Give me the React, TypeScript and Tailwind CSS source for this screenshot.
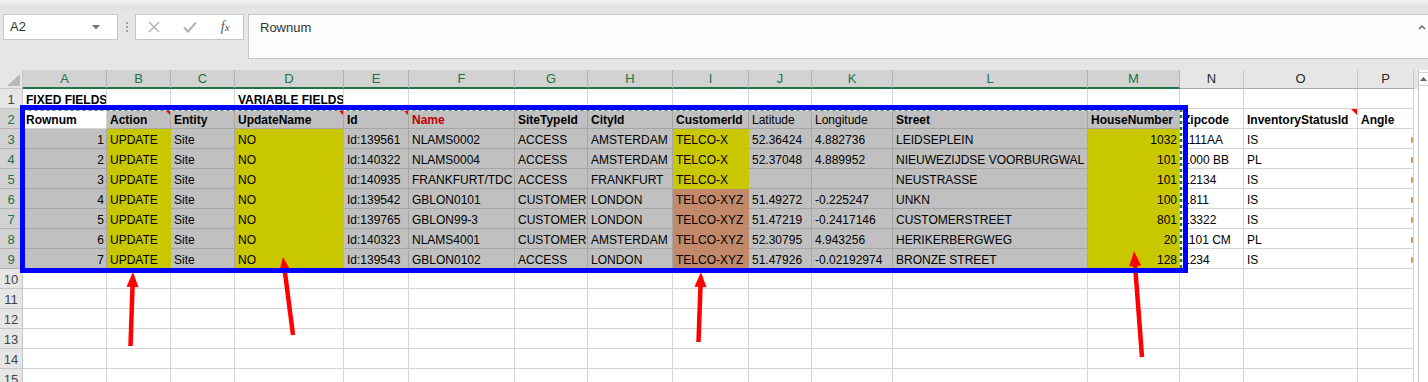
import React from 'react';

type Fill = 'w' | 'g' | 'y' | 'b';
type Cell = { t?: string; f: Fill; r?: boolean; b?: boolean; red?: boolean; tri?: boolean; mark?: boolean };

const fillCls: Record<Fill, string> = {
  w: 'bg-white border-r border-b border-[#d4d4d4]',
  g: 'bg-[#c0c0c0] border-r border-b border-[#a6a6a6]',
  y: 'bg-[#c9c700] border-r border-b border-[#c9c700]',
  b: 'bg-[#c1896a] border-r border-b border-[#c1896a]',
};

const data: string[][] = [
  ['1', 'Id:139561', 'NLAMS0002', 'ACCESS', 'AMSTERDAM', 'TELCO-X', '52.36424', '4.882736', 'LEIDSEPLEIN', '1032', '1111AA', 'IS'],
  ['2', 'Id:140322', 'NLAMS0004', 'ACCESS', 'AMSTERDAM', 'TELCO-X', '52.37048', '4.889952', 'NIEUWEZIJDSE VOORBURGWAL', '101', '1000 BB', 'PL'],
  ['3', 'Id:140935', 'FRANKFURT/TDC', 'ACCESS', 'FRANKFURT', 'TELCO-X', '', '', 'NEUSTRASSE', '101', '12134', 'IS'],
  ['4', 'Id:139542', 'GBLON0101', 'CUSTOMER', 'LONDON', 'TELCO-XYZ', '51.49272', '-0.225247', 'UNKN', '100', '1811', 'IS'],
  ['5', 'Id:139765', 'GBLON99-3', 'CUSTOMER', 'LONDON', 'TELCO-XYZ', '51.47219', '-0.2417146', 'CUSTOMERSTREET', '801', '13322', 'IS'],
  ['6', 'Id:140323', 'NLAMS4001', 'CUSTOMER', 'AMSTERDAM', 'TELCO-XYZ', '52.30795', '4.943256', 'HERIKERBERGWEG', '20', '1101 CM', 'PL'],
  ['7', 'Id:139543', 'GBLON0102', 'ACCESS', 'LONDON', 'TELCO-XYZ', '51.47926', '-0.02192974', 'BRONZE STREET', '128', '1234', 'IS'],
];

const empty = (): Cell[] => Array.from({ length: 16 }, () => ({ f: 'w' as Fill }));

const rows: Cell[][] = [];
{
  const r1 = empty();
  r1[0] = { t: 'FIXED FIELDS', f: 'w', b: true };
  r1[3] = { t: 'VARIABLE FIELDS', f: 'w', b: true };
  rows.push(r1);
  rows.push([
    { t: 'Rownum', f: 'w', b: true },
    { t: 'Action', f: 'g', b: true, tri: true },
    { t: 'Entity', f: 'g', b: true },
    { t: 'UpdateName', f: 'g', b: true, tri: true },
    { t: 'Id', f: 'g', b: true, tri: true },
    { t: 'Name', f: 'g', b: true, red: true },
    { t: 'SiteTypeId', f: 'g', b: true },
    { t: 'CityId', f: 'g', b: true },
    { t: 'CustomerId', f: 'g', b: true },
    { t: 'Latitude', f: 'g' },
    { t: 'Longitude', f: 'g' },
    { t: 'Street', f: 'g', b: true },
    { t: 'HouseNumber', f: 'g', b: true },
    { t: 'Zipcode', f: 'w', b: true },
    { t: 'InventoryStatusId', f: 'w', b: true, tri: true },
    { t: 'Angle', f: 'w', b: true },
  ]);
  data.forEach((d, i) => {
    rows.push([
      { t: d[0], f: 'g', r: true },
      { t: 'UPDATE', f: 'y' },
      { t: 'Site', f: 'g' },
      { t: 'NO', f: 'y' },
      { t: d[1], f: 'g' },
      { t: d[2], f: 'g' },
      { t: d[3], f: 'g' },
      { t: d[4], f: 'g' },
      { t: d[5], f: i < 3 ? 'y' : 'b' },
      { t: d[6], f: 'g' },
      { t: d[7], f: 'g' },
      { t: d[8], f: 'g' },
      { t: d[9], f: 'y', r: true },
      { t: d[10], f: 'w' },
      { t: d[11], f: 'w' },
      { f: 'w', mark: true },
    ]);
  });
  for (let i = 0; i < 6; i++) rows.push(empty());
}

const letters = 'ABCDEFGHIJKLMNOP'.split('');

function CellView({ c }: { c: Cell }) {
  if (c.mark) {
    return (
      <div className={`h-[20px] flex items-center justify-end pt-[2px] ${fillCls[c.f]}`}>
        <span className="block w-[2px] h-[6px] bg-[#dc9a5a] rounded-[1px]" />
      </div>
    );
  }
  return (
    <div
      className={`relative h-[20px] overflow-hidden whitespace-nowrap text-[12px] leading-[23px] ${fillCls[c.f]} ${
        c.r ? 'text-right pl-[3px] pr-[2px]' : 'text-left pl-[3px] pr-[1px]'
      } ${c.b ? 'font-bold' : 'font-normal'} ${c.red ? 'text-[#c00000]' : 'text-black'}`}
    >
      {c.t}
      {c.tri && (
        <span className="absolute top-0 right-0 w-0 h-0 border-l-[6px] border-l-transparent border-t-[6px] border-t-[#ff0000]" />
      )}
    </div>
  );
}

function Arrow({ x1, y1, x2, y2 }: { x1: number; y1: number; x2: number; y2: number }) {
  const dx = x2 - x1;
  const dy = y2 - y1;
  const len = Math.hypot(dx, dy);
  const ux = dx / len;
  const uy = dy / len;
  const hl = 15;
  const hw = 6;
  const bx = x2 - ux * hl;
  const by = y2 - uy * hl;
  const px = -uy;
  const py = ux;
  const pts = `${x2},${y2} ${bx + px * hw},${by + py * hw} ${bx - px * hw},${by - py * hw}`;
  return (
    <g>
      <line x1={x1} y1={y1} x2={bx + ux * 2} y2={by + uy * 2} stroke="#ff0000" strokeWidth={4.5} />
      <polygon points={pts} fill="#ff0000" />
    </g>
  );
}

export default function App() {
  return (
    <div className="relative w-[1428px] h-[382px] overflow-hidden bg-[#e6e6e6] font-['Liberation_Sans',Arial,sans-serif]">
      {/* ribbon remnant */}
      <div className="h-[14px] bg-gradient-to-b from-[#f3f3f3] via-[#e2e2e2] to-[#e6e6e6]" />

      {/* formula bar */}
      <div className="flex h-[45px] items-start">
        <div className="ml-[3px] w-[115px] h-[26px] border border-[#c6c6c6] bg-white flex items-center justify-between pl-[6px] pr-[17px]">
          <span className="text-[13px] text-[#333]">A2</span>
          <svg width="8" height="5" viewBox="0 0 8 5">
            <polygon points="0,0 8,0 4,4.5" fill="#777" />
          </svg>
        </div>
        <div className="w-[17px] h-[26px] flex flex-col items-center justify-center gap-[2px]">
          <span className="block w-[2px] h-[2px] bg-[#a0a0a0]" />
          <span className="block w-[2px] h-[2px] bg-[#a0a0a0]" />
          <span className="block w-[2px] h-[2px] bg-[#a0a0a0]" />
        </div>
        <div className="w-[109px] h-[26px] border border-[#c6c6c6] bg-white flex items-center">
          <div className="w-[36px] flex justify-center">
            <svg width="12" height="12" viewBox="0 0 12 12">
              <line x1="1" y1="1" x2="11" y2="11" stroke="#b0b0b0" strokeWidth="1.4" />
              <line x1="11" y1="1" x2="1" y2="11" stroke="#b0b0b0" strokeWidth="1.4" />
            </svg>
          </div>
          <div className="w-[36px] flex justify-center">
            <svg width="14" height="12" viewBox="0 0 14 12">
              <polyline points="1,6.5 5,10.5 13,1.5" fill="none" stroke="#b0b0b0" strokeWidth="1.9" />
            </svg>
          </div>
          <div className="w-[36px] flex justify-center">
            <span className="font-['Liberation_Serif',serif] italic text-[14px] leading-[14px] text-[#555]">
              f<span className="text-[11px]">x</span>
            </span>
          </div>
        </div>
        <div className="ml-[4px] flex-1 h-[45px] border border-r-0 border-[#c6c6c6] bg-[#fdfdfd] flex items-start justify-between">
          <span className="pl-[11px] text-[13px] leading-[25px] text-[#333]">Rownum</span>
          <svg className="mt-[9px] mr-[2px]" width="8" height="6" viewBox="0 0 8 6">
            <polyline points="1,5 4,2 7,5" fill="none" stroke="#666" strokeWidth="1.5" />
          </svg>
        </div>
      </div>

      <div className="h-[11px]" />

      {/* sheet */}
      <div className="flex">
        <div className="grid grid-cols-[23px_84px_64px_64px_109px_65px_106px_73px_85px_76px_63px_81px_195px_92px_64px_114px_56px] w-[1414px]">
          <div className="h-[19px] bg-[#e6e6e6] border-r border-b border-[#c6c6c6] flex items-end justify-end pr-[2px] pb-[2px]">
            <svg width="13" height="12" viewBox="0 0 13 12">
              <polygon points="13,0 13,12 0,12" fill="#b8b8b8" />
            </svg>
          </div>
          {letters.map((l, i) => {
            const sel = i <= 12;
            return (
              <div
                key={l}
                className={`h-[19px] text-center text-[13px] leading-[18px] border-r ${
                  sel
                    ? 'bg-[#d2d2d2] text-[#217346] border-r-[#b4b4b4] border-b-2 border-b-[#217346]'
                    : 'bg-[#e6e6e6] text-[#262626] border-r-[#c6c6c6] border-b border-b-[#ababab]'
                }`}
              >
                {l}
              </div>
            );
          })}
          {rows.map((row, ri) => {
            const rn = ri + 1;
            const sel = rn >= 2 && rn <= 9;
            return (
              <React.Fragment key={ri}>
                <div
                  className={`h-[20px] text-center text-[13px] leading-[21px] border-b border-r ${
                    sel
                      ? 'bg-[#d2d2d2] text-[#217346] border-b-[#b4b4b4] border-r-[#217346]'
                      : 'bg-[#e6e6e6] text-[#444] border-b-[#c6c6c6] border-r-[#c6c6c6]'
                  }`}
                >
                  {rn}
                </div>
                {row.map((c, ci) => (
                  <CellView key={ci} c={c} />
                ))}
              </React.Fragment>
            );
          })}
        </div>
        <div className="w-[4px] flex flex-col">
          <div className="h-[19px] bg-[#e6e6e6]" />
          <div className="flex-1 bg-white" />
        </div>
        <div className="w-[10px] h-[312px] border-l border-[#c6c6c6] bg-white flex flex-col items-center">
          <div className="mt-[2px] w-full h-[14px] border-t border-b border-[#d0d0d0] flex items-center justify-center">
            <svg width="7" height="4" viewBox="0 0 7 4">
              <polygon points="0,4 7,4 3.5,0" fill="#666" />
            </svg>
          </div>
        </div>
      </div>

      {/* blue highlight frame */}
      <div className="absolute left-[20px] top-[105px] w-[1168px] h-[168px] border-[5px] border-[#0000ff] pointer-events-none" />

      {/* marquee + arrows */}
      <svg className="absolute inset-0 pointer-events-none" width="1428" height="382" viewBox="0 0 1428 382">
        <g>
          <rect x="22.5" y="109.5" width="1158.5" height="160" fill="none" stroke="#ffffff" strokeWidth="2.5" />
          <rect x="22.5" y="109.5" width="1158.5" height="160" fill="none" stroke="#217346" strokeWidth="2.5" strokeDasharray="3 3" />
        </g>
        <Arrow x1={130.5} y1={346} x2={133} y2={272} />
        <Arrow x1={293} y1={335} x2={283} y2={257} />
        <Arrow x1={698.5} y1={342} x2={701} y2={272} />
        <Arrow x1={1142} y1={357} x2={1134} y2={251} />
      </svg>
      {/* re-cover marquee edges that sit under the blue frame */}
      <div className="absolute left-[20px] top-[105px] w-[1168px] h-[168px] border-[5px] border-[#0000ff] pointer-events-none" />
    </div>
  );
}
